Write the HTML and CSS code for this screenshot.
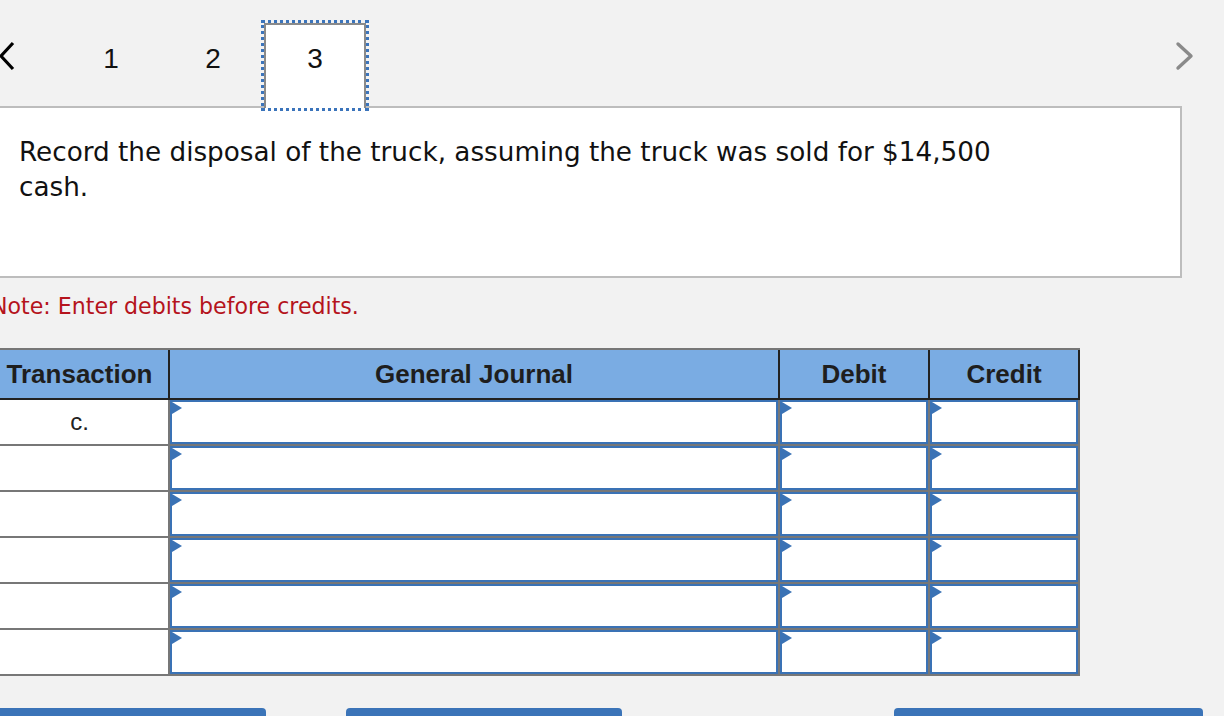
FILE: index.html
```html
<!DOCTYPE html>
<html lang="en">
<head>
<meta charset="utf-8">
<title>Journal entry</title>
<link rel="stylesheet" href="styles.css">
</head>
<body>
<div class="page">
  <nav class="tabs">
    <div class="arrow prev">
      <svg width="18" height="30" viewBox="0 0 18 30"><polyline points="15,2 3,15 15,28" fill="none" stroke="#000" stroke-width="3.2" stroke-linejoin="miter"/></svg>
    </div>
    <div class="tab">1</div>
    <div class="tab">2</div>
    <div class="tab active">3</div>
    <div class="arrow next">
      <svg width="20" height="30" viewBox="0 0 20 30"><polyline points="3,3 16,15 3,27" fill="none" stroke="#8a8a8a" stroke-width="3.4" stroke-linecap="round" stroke-linejoin="round"/></svg>
    </div>
  </nav>
  <section class="question">
    <p>Record the disposal of the truck, assuming the truck was sold for $14,500<br>cash.</p>
  </section>
  <p class="note">Note: Enter debits before credits.</p>
  <table class="journal">
    <colgroup>
      <col class="c-trans">
      <col class="c-gj">
      <col class="c-amt">
      <col class="c-amt">
    </colgroup>
    <thead>
      <tr>
        <th>Transaction</th>
        <th>General Journal</th>
        <th>Debit</th>
        <th>Credit</th>
      </tr>
    </thead>
    <tbody>
      <tr><td class="trans">c.</td><td class="cell"><div class="field"></div></td><td class="cell"><div class="field"></div></td><td class="cell"><div class="field"></div></td></tr>
      <tr><td class="trans"></td><td class="cell"><div class="field"></div></td><td class="cell"><div class="field"></div></td><td class="cell"><div class="field"></div></td></tr>
      <tr><td class="trans"></td><td class="cell"><div class="field"></div></td><td class="cell"><div class="field"></div></td><td class="cell"><div class="field"></div></td></tr>
      <tr><td class="trans"></td><td class="cell"><div class="field"></div></td><td class="cell"><div class="field"></div></td><td class="cell"><div class="field"></div></td></tr>
      <tr><td class="trans"></td><td class="cell"><div class="field"></div></td><td class="cell"><div class="field"></div></td><td class="cell"><div class="field"></div></td></tr>
      <tr><td class="trans"></td><td class="cell"><div class="field"></div></td><td class="cell"><div class="field"></div></td><td class="cell"><div class="field"></div></td></tr>
    </tbody>
  </table>
  <div class="actions">
    <div class="btn b1"></div>
    <div class="btn b2"></div>
    <div class="btn b3"></div>
  </div>
</div>
</body>
</html>
```
FILE: styles.css
```css
html, body {
  margin: 0;
  padding: 0;
  background: #f2f2f2;
  overflow: hidden;
}
.page {
  margin-left: -9px;
  width: 1233px;
}
.tabs {
  display: flex;
  align-items: flex-end;
  height: 106px;
  font-family: "Liberation Sans", Arial, sans-serif;
  font-size: 28px;
  color: #111;
}
.arrow {
  align-self: flex-start;
}
.arrow.prev {
  width: 69px;
  padding-top: 41px;
}
.arrow.prev svg {
  display: block;
  margin-left: 7px;
}
.arrow.next {
  margin-left: auto;
  margin-right: 29px;
  padding-top: 41px;
}
.arrow.next svg {
  display: block;
}
.tab {
  width: 102px;
  height: 83px;
  box-sizing: border-box;
  padding-top: 22px;
  line-height: 28px;
  text-align: center;
}
.tab.active {
  position: relative;
  z-index: 1;
  height: 85px;
  margin-bottom: -2px;
  background: #fff;
  border: 2px solid #8a8a8a;
  border-bottom: 0;
  padding-top: 20px;
  outline: 3px dotted #3b74bb;
  outline-offset: 0;
}
.question {
  width: 1191px;
  height: 172px;
  box-sizing: border-box;
  background: #fff;
  border: 2px solid #bdbdbd;
  padding: 27px 24px 0 26px;
}
.question p {
  margin: 0;
  font-family: "DejaVu Sans", Verdana, sans-serif;
  font-size: 26.25px;
  line-height: 35px;
  color: #111;
}
.note {
  margin: 15px 0 29px;
  font-family: "DejaVu Sans", Verdana, sans-serif;
  font-size: 22.1px;
  line-height: 27px;
  color: #b5141c;
}
.journal {
  border-collapse: separate;
  border-spacing: 0;
  border-top: 2px solid #777;
  table-layout: fixed;
  width: 1089px;
  margin-top: -1px;
}
.journal .c-trans { width: 179px; }
.journal .c-gj { width: 610px; }
.journal .c-amt { width: 150px; }
.journal th {
  height: 48px;
  padding: 0;
  background: #7aace3;
  border-right: 2px solid #222;
  border-bottom: 2px solid #222;
  font-family: "Liberation Sans", Arial, sans-serif;
  font-size: 26px;
  font-weight: bold;
  color: #1e1e1e;
  text-align: center;
}
.journal td {
  height: 44px;
  padding: 0;
  border-right: 2px solid #777;
  border-bottom: 2px solid #777;
  background: #fff;
}
.journal td.trans {
  text-align: center;
  font-family: "Liberation Sans", Arial, sans-serif;
  font-size: 24px;
  color: #222;
}
.field {
  position: relative;
  height: 44px;
  box-sizing: border-box;
  border: 2px solid #3a72b5;
  background: #fff;
}
.field::before {
  content: "";
  position: absolute;
  left: 0;
  top: 0;
  border-left: 10px solid #3a72b5;
  border-top: 6.5px solid transparent;
  border-bottom: 6.5px solid transparent;
}
.actions {
  display: flex;
  margin-top: 32px;
}
.btn {
  height: 40px;
  background: #3b74b8;
  border-radius: 4px;
}
.b1 { width: 275px; }
.b2 { width: 276px; margin-left: 80px; }
.b3 { width: 309px; margin-left: 272px; }
```
